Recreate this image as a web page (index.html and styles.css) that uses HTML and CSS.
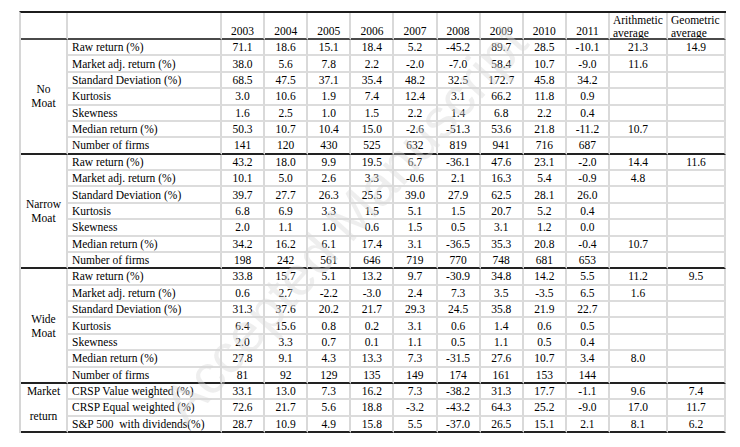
FILE: index.html
```html
<!DOCTYPE html>
<html lang="en">
<head>
<meta charset="utf-8">
<title>Returns by moat rating</title>
<link rel="stylesheet" href="styles.css">
</head>
<body>
<div class="page">
  <div class="tbl">
    <div class="c hd"></div>
    <div class="c hd"></div>
    <div class="c hd yr">2003</div>
    <div class="c hd yr">2004</div>
    <div class="c hd yr">2005</div>
    <div class="c hd yr">2006</div>
    <div class="c hd yr">2007</div>
    <div class="c hd yr">2008</div>
    <div class="c hd yr">2009</div>
    <div class="c hd yr">2010</div>
    <div class="c hd yr">2011</div>
    <div class="c hd avg">Arithmetic<br>average</div>
    <div class="c hd avg">Geometric<br>average</div>

    <div class="c grp g1"><span>No</span><span>Moat</span></div>
    <div class="c lbl">Raw return (%)</div><div class="c n">71.1</div><div class="c n">18.6</div><div class="c n">15.1</div><div class="c n">18.4</div><div class="c n">5.2</div><div class="c n">-45.2</div><div class="c n">89.7</div><div class="c n">28.5</div><div class="c n">-10.1</div><div class="c n">21.3</div><div class="c n">14.9</div>
    <div class="c lbl">Market adj. return (%)</div><div class="c n">38.0</div><div class="c n">5.6</div><div class="c n">7.8</div><div class="c n">2.2</div><div class="c n">-2.0</div><div class="c n">-7.0</div><div class="c n">58.4</div><div class="c n">10.7</div><div class="c n">-9.0</div><div class="c n">11.6</div><div class="c n"></div>
    <div class="c lbl">Standard Deviation (%)</div><div class="c n">68.5</div><div class="c n">47.5</div><div class="c n">37.1</div><div class="c n">35.4</div><div class="c n">48.2</div><div class="c n">32.5</div><div class="c n">172.7</div><div class="c n">45.8</div><div class="c n">34.2</div><div class="c n"></div><div class="c n"></div>
    <div class="c lbl">Kurtosis</div><div class="c n">3.0</div><div class="c n">10.6</div><div class="c n">1.9</div><div class="c n">7.4</div><div class="c n">12.4</div><div class="c n">3.1</div><div class="c n">66.2</div><div class="c n">11.8</div><div class="c n">0.9</div><div class="c n"></div><div class="c n"></div>
    <div class="c lbl">Skewness</div><div class="c n">1.6</div><div class="c n">2.5</div><div class="c n">1.0</div><div class="c n">1.5</div><div class="c n">2.2</div><div class="c n">1.4</div><div class="c n">6.8</div><div class="c n">2.2</div><div class="c n">0.4</div><div class="c n"></div><div class="c n"></div>
    <div class="c lbl">Median return (%)</div><div class="c n">50.3</div><div class="c n">10.7</div><div class="c n">10.4</div><div class="c n">15.0</div><div class="c n">-2.6</div><div class="c n">-51.3</div><div class="c n">53.6</div><div class="c n">21.8</div><div class="c n">-11.2</div><div class="c n">10.7</div><div class="c n"></div>
    <div class="row last">
      <div class="c lbl">Number of firms</div><div class="c n">141</div><div class="c n">120</div><div class="c n">430</div><div class="c n">525</div><div class="c n">632</div><div class="c n">819</div><div class="c n">941</div><div class="c n">716</div><div class="c n">687</div><div class="c n"></div><div class="c n"></div>
    </div>

    <div class="c grp g2"><span>Narrow</span><span>Moat</span></div>
    <div class="c lbl">Raw return (%)</div><div class="c n">43.2</div><div class="c n">18.0</div><div class="c n">9.9</div><div class="c n">19.5</div><div class="c n">6.7</div><div class="c n">-36.1</div><div class="c n">47.6</div><div class="c n">23.1</div><div class="c n">-2.0</div><div class="c n">14.4</div><div class="c n">11.6</div>
    <div class="c lbl">Market adj. return (%)</div><div class="c n">10.1</div><div class="c n">5.0</div><div class="c n">2.6</div><div class="c n">3.3</div><div class="c n">-0.6</div><div class="c n">2.1</div><div class="c n">16.3</div><div class="c n">5.4</div><div class="c n">-0.9</div><div class="c n">4.8</div><div class="c n"></div>
    <div class="c lbl">Standard Deviation (%)</div><div class="c n">39.7</div><div class="c n">27.7</div><div class="c n">26.3</div><div class="c n">25.5</div><div class="c n">39.0</div><div class="c n">27.9</div><div class="c n">62.5</div><div class="c n">28.1</div><div class="c n">26.0</div><div class="c n"></div><div class="c n"></div>
    <div class="c lbl">Kurtosis</div><div class="c n">6.8</div><div class="c n">6.9</div><div class="c n">3.3</div><div class="c n">1.5</div><div class="c n">5.1</div><div class="c n">1.5</div><div class="c n">20.7</div><div class="c n">5.2</div><div class="c n">0.4</div><div class="c n"></div><div class="c n"></div>
    <div class="c lbl">Skewness</div><div class="c n">2.0</div><div class="c n">1.1</div><div class="c n">1.0</div><div class="c n">0.6</div><div class="c n">1.5</div><div class="c n">0.5</div><div class="c n">3.1</div><div class="c n">1.2</div><div class="c n">0.0</div><div class="c n"></div><div class="c n"></div>
    <div class="c lbl">Median return (%)</div><div class="c n">34.2</div><div class="c n">16.2</div><div class="c n">6.1</div><div class="c n">17.4</div><div class="c n">3.1</div><div class="c n">-36.5</div><div class="c n">35.3</div><div class="c n">20.8</div><div class="c n">-0.4</div><div class="c n">10.7</div><div class="c n"></div>
    <div class="row last">
      <div class="c lbl">Number of firms</div><div class="c n">198</div><div class="c n">242</div><div class="c n">561</div><div class="c n">646</div><div class="c n">719</div><div class="c n">770</div><div class="c n">748</div><div class="c n">681</div><div class="c n">653</div><div class="c n"></div><div class="c n"></div>
    </div>

    <div class="c grp g3"><span>Wide</span><span>Moat</span></div>
    <div class="c lbl">Raw return (%)</div><div class="c n">33.8</div><div class="c n">15.7</div><div class="c n">5.1</div><div class="c n">13.2</div><div class="c n">9.7</div><div class="c n">-30.9</div><div class="c n">34.8</div><div class="c n">14.2</div><div class="c n">5.5</div><div class="c n">11.2</div><div class="c n">9.5</div>
    <div class="c lbl">Market adj. return (%)</div><div class="c n">0.6</div><div class="c n">2.7</div><div class="c n">-2.2</div><div class="c n">-3.0</div><div class="c n">2.4</div><div class="c n">7.3</div><div class="c n">3.5</div><div class="c n">-3.5</div><div class="c n">6.5</div><div class="c n">1.6</div><div class="c n"></div>
    <div class="c lbl">Standard Deviation (%)</div><div class="c n">31.3</div><div class="c n">37.6</div><div class="c n">20.2</div><div class="c n">21.7</div><div class="c n">29.3</div><div class="c n">24.5</div><div class="c n">35.8</div><div class="c n">21.9</div><div class="c n">22.7</div><div class="c n"></div><div class="c n"></div>
    <div class="c lbl">Kurtosis</div><div class="c n">6.4</div><div class="c n">15.6</div><div class="c n">0.8</div><div class="c n">0.2</div><div class="c n">3.1</div><div class="c n">0.6</div><div class="c n">1.4</div><div class="c n">0.6</div><div class="c n">0.5</div><div class="c n"></div><div class="c n"></div>
    <div class="c lbl">Skewness</div><div class="c n">2.0</div><div class="c n">3.3</div><div class="c n">0.7</div><div class="c n">0.1</div><div class="c n">1.1</div><div class="c n">0.5</div><div class="c n">1.1</div><div class="c n">0.5</div><div class="c n">0.4</div><div class="c n"></div><div class="c n"></div>
    <div class="c lbl">Median return (%)</div><div class="c n">27.8</div><div class="c n">9.1</div><div class="c n">4.3</div><div class="c n">13.3</div><div class="c n">7.3</div><div class="c n">-31.5</div><div class="c n">27.6</div><div class="c n">10.7</div><div class="c n">3.4</div><div class="c n">8.0</div><div class="c n"></div>
    <div class="row last">
      <div class="c lbl">Number of firms</div><div class="c n">81</div><div class="c n">92</div><div class="c n">129</div><div class="c n">135</div><div class="c n">149</div><div class="c n">174</div><div class="c n">161</div><div class="c n">153</div><div class="c n">144</div><div class="c n"></div><div class="c n"></div>
    </div>

    <div class="c grp g4"><span>Market</span><span>return</span></div>
    <div class="c lbl">CRSP Value weighted (%)</div><div class="c n">33.1</div><div class="c n">13.0</div><div class="c n">7.3</div><div class="c n">16.2</div><div class="c n">7.3</div><div class="c n">-38.2</div><div class="c n">31.3</div><div class="c n">17.7</div><div class="c n">-1.1</div><div class="c n">9.6</div><div class="c n">7.4</div>
    <div class="c lbl">CRSP Equal weighted (%)</div><div class="c n">72.6</div><div class="c n">21.7</div><div class="c n">5.6</div><div class="c n">18.8</div><div class="c n">-3.2</div><div class="c n">-43.2</div><div class="c n">64.3</div><div class="c n">25.2</div><div class="c n">-9.0</div><div class="c n">17.0</div><div class="c n">11.7</div>
    <div class="row last">
      <div class="c lbl">S&amp;P 500&nbsp; with dividends(%)</div><div class="c n">28.7</div><div class="c n">10.9</div><div class="c n">4.9</div><div class="c n">15.8</div><div class="c n">5.5</div><div class="c n">-37.0</div><div class="c n">26.5</div><div class="c n">15.1</div><div class="c n">2.1</div><div class="c n">8.1</div><div class="c n">6.2</div>
    </div>
  </div>
  <div class="wm" aria-hidden="true">Accepted Manuscript</div>
</div>
</body>
</html>
```

FILE: styles.css
```css
html, body {
  margin: 0;
  padding: 0;
  background: #ffffff;
}

body {
  font-family: "Liberation Serif", "Times New Roman", "DejaVu Serif", serif;
  font-size: 11.5px;
  color: #000000;
}

.page {
  position: relative;
  width: 740px;
  height: 447px;
  overflow: hidden;
  padding: 11px 0 0 19px;
  box-sizing: border-box;
}

.tbl {
  display: grid;
  grid-template-columns: 47px 154px repeat(9, 43.11px) 58px 58px;
  grid-template-rows: 27px repeat(24, 16.375px);
  width: max-content;
  border-top: 2px solid #1c1c1c;
  border-left: 2px solid #d6d6d6;
}

.row {
  display: contents;
}

.c {
  box-sizing: border-box;
  border-right: 2px solid #d9d9d9;
  border-bottom: 2px solid #dcdcdc;
  line-height: 14px;
  white-space: nowrap;
  overflow: hidden;
}

.hd {
  border-bottom: 2px solid #4a4a4a;
}

.yr {
  display: flex;
  align-items: flex-end;
  justify-content: center;
  padding-bottom: 0;
}

.avg {
  padding: 1px 0 0 3px;
  line-height: 12.5px;
}

.lbl {
  display: flex;
  align-items: center;
  padding-left: 4px;
}

.n {
  display: flex;
  align-items: center;
  justify-content: center;
}

.last .c {
  border-bottom: 2px solid #222222;
}

.grp {
  grid-column: 1;
  display: flex;
  flex-direction: column;
  align-items: center;
  justify-content: center;
  border-bottom: 2px solid #222222;
}

.g1 { grid-row: 2 / span 7; }
.g2 { grid-row: 9 / span 7; }
.g3 { grid-row: 16 / span 7; }
.g4 {
  grid-row: 23 / span 3;
  justify-content: flex-start;
  gap: 11px;
  padding-top: 0;
}

.wm {
  position: absolute;
  left: 345px;
  top: 223px;
  transform: translate(-50%, -50%) rotate(-48deg);
  font-family: "Liberation Sans", Arial, sans-serif;
  font-size: 55px;
  line-height: 1;
  white-space: nowrap;
  color: rgba(215, 215, 215, 0.42);
  pointer-events: none;
}
```
